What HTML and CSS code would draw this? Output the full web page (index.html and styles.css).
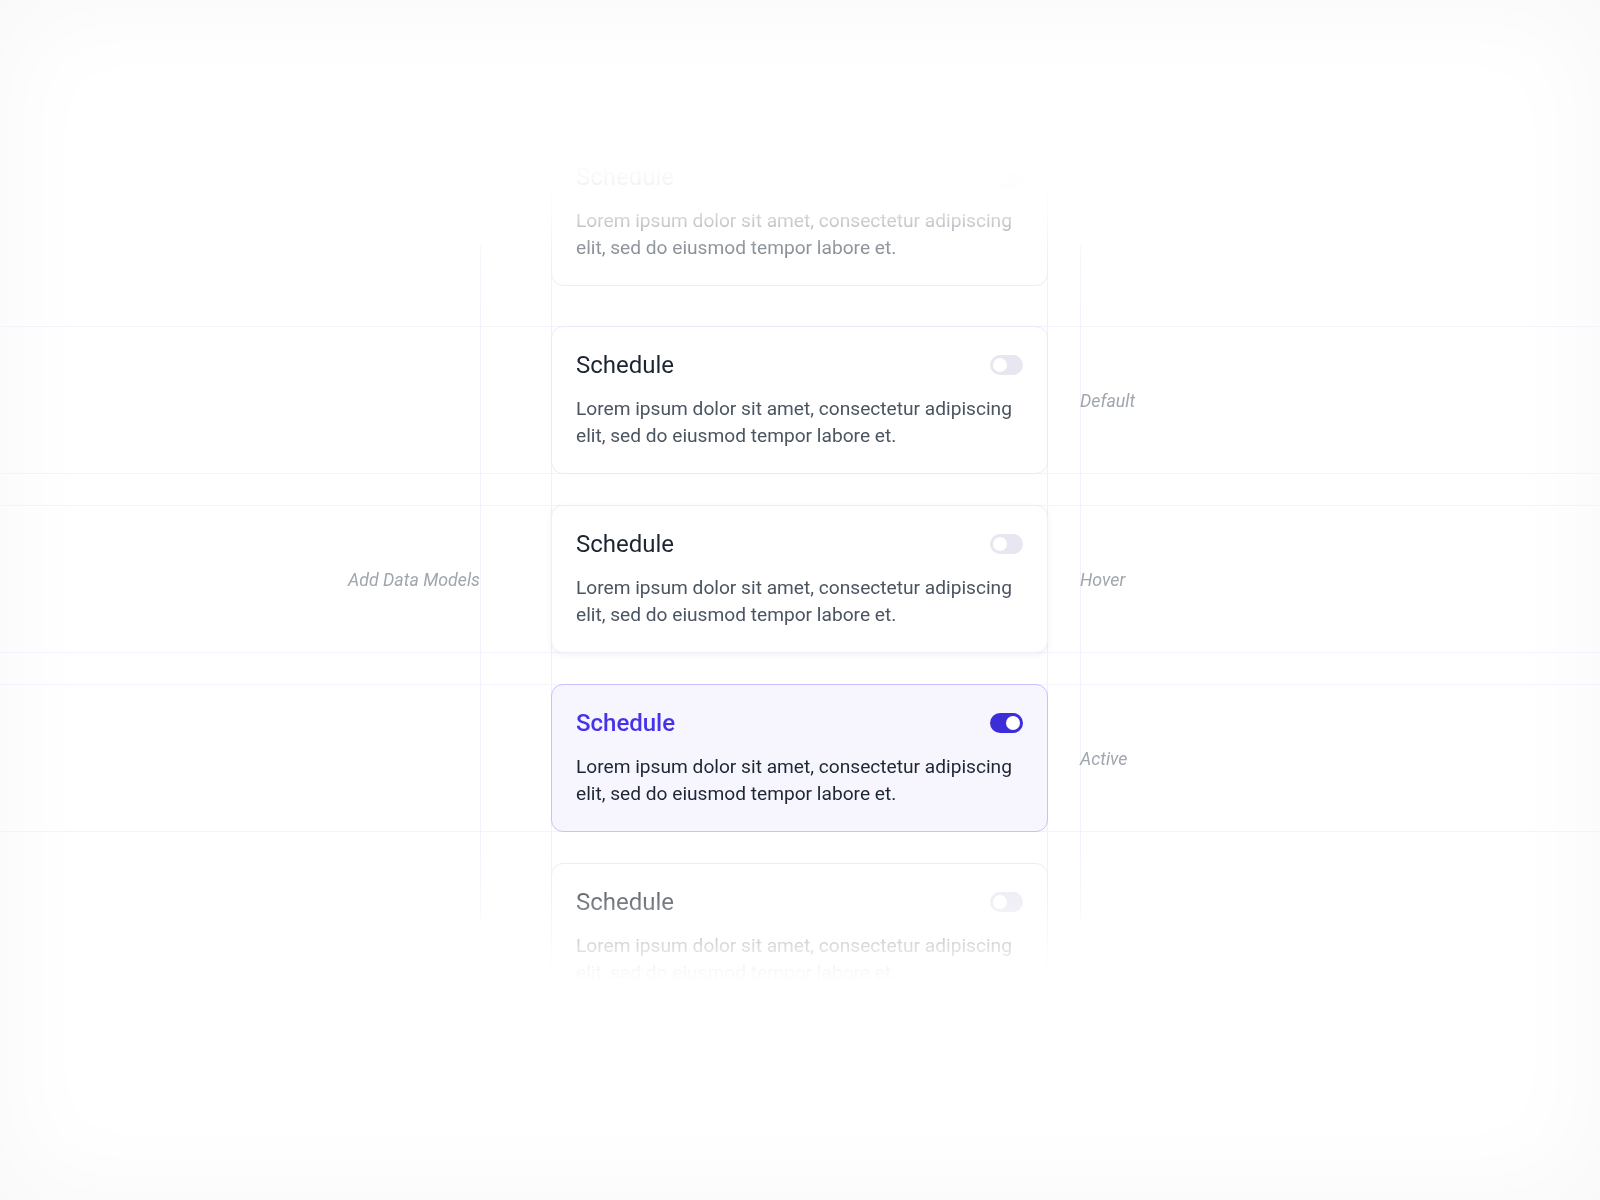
FILE: index.html
```html
<!DOCTYPE html>
<html lang="en">
<head>
<meta charset="utf-8">
<title>Schedule card states</title>
<link rel="stylesheet" href="styles.css">
</head>
<body>
<div class="page">
  <div class="canvas">
    <div class="row row-first">
      <div class="label-left"></div>
      <div class="card">
        <div class="card-head">
          <span class="card-title">Schedule</span>
          <span class="toggle"><span class="knob"></span></span>
        </div>
        <p class="card-text">Lorem ipsum dolor sit amet, consectetur adipiscing elit, sed do eiusmod tempor labore et.</p>
      </div>
      <div class="label-right"></div>
    </div>

    <div class="row guided">
      <div class="label-left"></div>
      <div class="card">
        <div class="card-head">
          <span class="card-title">Schedule</span>
          <span class="toggle"><span class="knob"></span></span>
        </div>
        <p class="card-text">Lorem ipsum dolor sit amet, consectetur adipiscing elit, sed do eiusmod tempor labore et.</p>
      </div>
      <div class="label-right">Default</div>
    </div>

    <div class="row guided">
      <div class="label-left">Add Data Models</div>
      <div class="card card-hover">
        <div class="card-head">
          <span class="card-title">Schedule</span>
          <span class="toggle"><span class="knob"></span></span>
        </div>
        <p class="card-text">Lorem ipsum dolor sit amet, consectetur adipiscing elit, sed do eiusmod tempor labore et.</p>
      </div>
      <div class="label-right">Hover</div>
    </div>

    <div class="row guided">
      <div class="label-left"></div>
      <div class="card card-active">
        <div class="card-head">
          <span class="card-title">Schedule</span>
          <span class="toggle toggle-on"><span class="knob"></span></span>
        </div>
        <p class="card-text">Lorem ipsum dolor sit amet, consectetur adipiscing elit, sed do eiusmod tempor labore et.</p>
      </div>
      <div class="label-right">Active</div>
    </div>

    <div class="row">
      <div class="label-left"></div>
      <div class="card">
        <div class="card-head">
          <span class="card-title">Schedule</span>
          <span class="toggle"><span class="knob"></span></span>
        </div>
        <p class="card-text">Lorem ipsum dolor sit amet, consectetur adipiscing elit, sed do eiusmod tempor labore et.</p>
      </div>
      <div class="label-right"></div>
    </div>
  </div>
</div>
</body>
</html>
```

FILE: styles.css
```css
html, body {
  margin: 0;
  padding: 0;
  background: #ffffff;
}

body {
  font-family: Roboto, "Liberation Sans", Arial, sans-serif;
}

.page {
  width: 1600px;
  height: 1200px;
  overflow: hidden;
  background: #ffffff;
  box-shadow: inset 0 0 110px rgba(0, 0, 0, 0.035);
}

.canvas {
  height: 1200px;
  box-sizing: border-box;
  padding-top: 138px;
  display: flex;
  flex-direction: column;
  gap: 31px;
  background:
    linear-gradient(#f3f1fb, #f3f1fb) 480px 245px / 1px 673px no-repeat,
    linear-gradient(#f3f1fb, #f3f1fb) 1080px 245px / 1px 673px no-repeat,
    linear-gradient(#f1effb, #f1effb) 551px 138px / 1px 873px no-repeat,
    linear-gradient(#f1effb, #f1effb) 1047px 138px / 1px 873px no-repeat;
  -webkit-mask-image: linear-gradient(to bottom,
    transparent 162px,
    rgba(0,0,0,0.04) 180px,
    rgba(0,0,0,0.12) 200px,
    rgba(0,0,0,0.27) 220px,
    rgba(0,0,0,0.62) 247px,
    rgba(0,0,0,0.9) 286px,
    #000 322px,
    #000 850px,
    rgba(0,0,0,0.62) 902px,
    rgba(0,0,0,0.22) 945px,
    rgba(0,0,0,0.04) 971px,
    transparent 985px);
  mask-image: linear-gradient(to bottom,
    transparent 162px,
    rgba(0,0,0,0.04) 180px,
    rgba(0,0,0,0.12) 200px,
    rgba(0,0,0,0.27) 220px,
    rgba(0,0,0,0.62) 247px,
    rgba(0,0,0,0.9) 286px,
    #000 322px,
    #000 850px,
    rgba(0,0,0,0.62) 902px,
    rgba(0,0,0,0.22) 945px,
    rgba(0,0,0,0.04) 971px,
    transparent 985px);
}

.row {
  display: grid;
  grid-template-columns: 480px 71px 497px 32px 1fr;
  align-items: center;
}

.row-first {
  margin-bottom: 9px;
}

.guided {
  background:
    linear-gradient(#f4f2fb, #f4f2fb) left top / 100% 1px no-repeat,
    linear-gradient(#f4f2fb, #f4f2fb) left bottom / 100% 1px no-repeat;
}

.label-left,
.label-right {
  font-style: italic;
  font-size: 17.8px;
  color: #a0a6ad;
}

.label-left {
  grid-column: 1;
  text-align: right;
}

.label-right {
  grid-column: 5;
  text-align: left;
}

.card {
  grid-column: 3;
  box-sizing: border-box;
  height: 148px;
  padding: 24px;
  border: 1px solid #ebe8f9;
  border-radius: 12px;
  background: #ffffff;
  display: flex;
  flex-direction: column;
  gap: 16px;
}

.card-hover {
  border-color: #efedf8;
  box-shadow: 0 2px 6px rgba(40, 30, 90, 0.06);
}

.card-active {
  background: #f7f6ff;
  border-color: #c8c1fa;
}

.card-head {
  height: 28px;
  display: flex;
  align-items: center;
  justify-content: space-between;
}

.card-title {
  font-size: 24px;
  line-height: 28px;
  font-weight: 400;
  color: #1b2632;
}

.card-active .card-title {
  color: #4533ea;
  font-weight: 500;
}

.card-text {
  margin: 0;
  font-size: 19.15px;
  line-height: 27px;
  color: #4a5561;
}

.card-active .card-text {
  color: #1d2733;
}

.toggle {
  width: 33px;
  height: 20px;
  box-sizing: border-box;
  border-radius: 10px;
  background: #e8e6f1;
  padding: 0 3px;
  display: flex;
  align-items: center;
  justify-content: flex-start;
}

.toggle-on {
  background: #3b2dd8;
  justify-content: flex-end;
}

.knob {
  width: 14px;
  height: 14px;
  border-radius: 50%;
  background: #ffffff;
}
```
